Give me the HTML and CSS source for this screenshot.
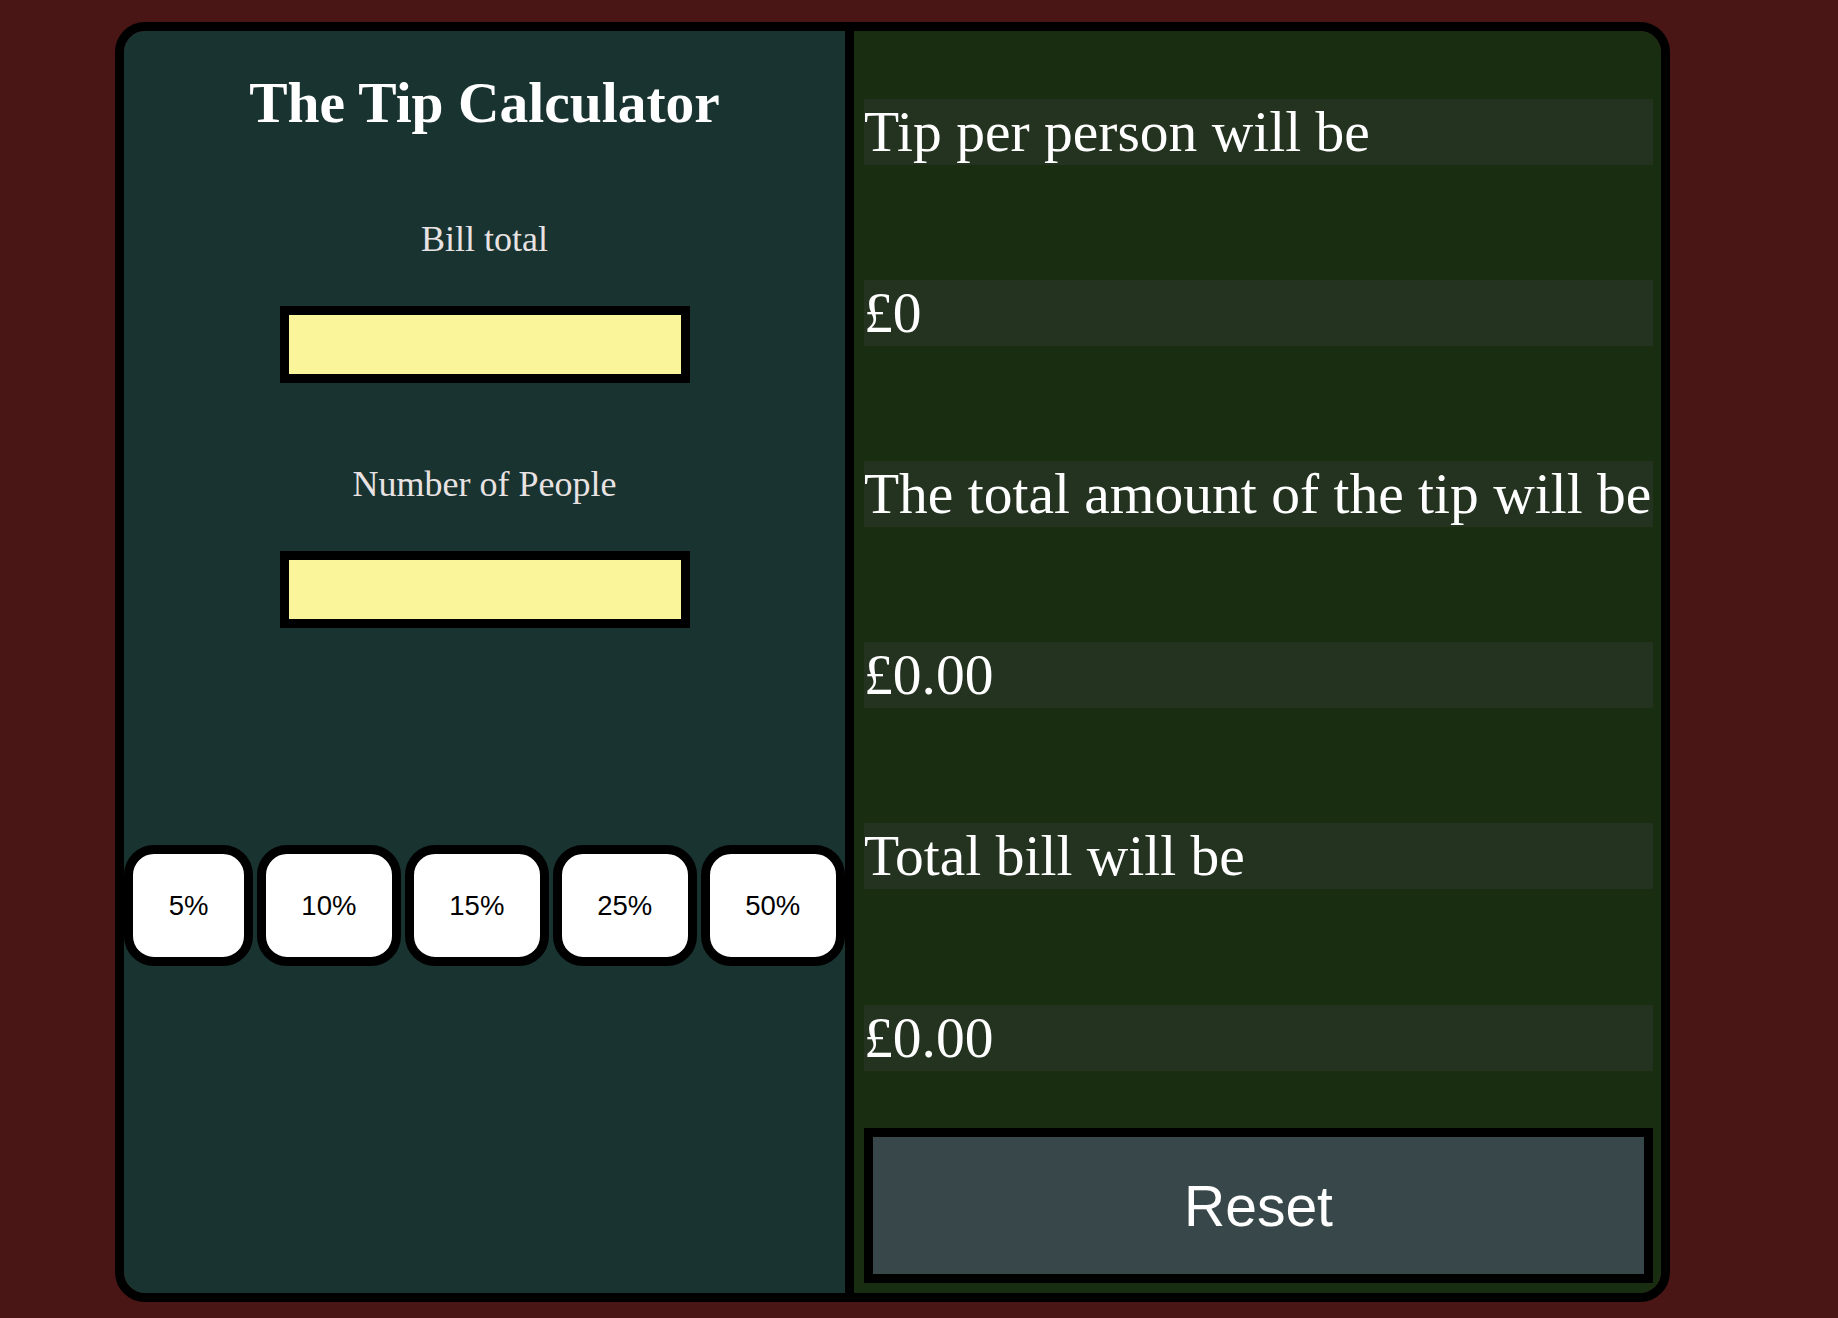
FILE: index.html
```html
<!DOCTYPE html>
<html lang="en">
<head>
<meta charset="utf-8">
<title>The Tip Calculator</title>
<link rel="stylesheet" href="styles.css">
</head>
<body>
<main class="calculator">
  <section class="inputs">
    <h1 class="title">The Tip Calculator</h1>
    <label class="field-label field-label--first" for="bill">Bill total</label>
    <input class="field-input" id="bill" type="text">
    <label class="field-label field-label--second" for="people">Number of People</label>
    <input class="field-input" id="people" type="text">
    <div class="tips">
      <button class="tip-btn" type="button">5%</button>
      <button class="tip-btn" type="button">10%</button>
      <button class="tip-btn" type="button">15%</button>
      <button class="tip-btn" type="button">25%</button>
      <button class="tip-btn" type="button">50%</button>
    </div>
  </section>
  <section class="results">
    <p class="result">Tip per person will be</p>
    <p class="result">£0</p>
    <p class="result">The total amount of the tip will be</p>
    <p class="result">£0.00</p>
    <p class="result">Total bill will be</p>
    <p class="result">£0.00</p>
    <button class="reset-btn" type="button">Reset</button>
  </section>
</main>
</body>
</html>
```
FILE: styles.css
```css
html, body {
  margin: 0;
  padding: 0;
}

body {
  background: #4a1515;
  font-family: "Liberation Serif", "Times New Roman", serif;
  height: 1318px;
  overflow: hidden;
}

.calculator {
  box-sizing: border-box;
  width: 1555px;
  height: 1280px;
  margin: 22px 0 0 115px;
  border: 9px solid #000;
  border-radius: 30px;
  overflow: hidden;
  display: grid;
  grid-template-columns: 730px 1fr;
}

.inputs {
  background: #183330;
  border-right: 9px solid #000;
  display: flex;
  flex-direction: column;
  align-items: center;
  min-width: 0;
}

.title {
  margin: 39px 0 0;
  font-size: 57.5px;
  line-height: 66px;
  font-weight: bold;
  color: #ffffff;
  white-space: nowrap;
}

.field-label {
  display: block;
  font-size: 36px;
  line-height: 41px;
  color: #e8e2e2;
  margin-bottom: 46px;
}

.field-label--first {
  margin-top: 83px;
}

.field-label--second {
  margin-top: 81px;
}

.field-input {
  box-sizing: border-box;
  width: 410px;
  height: 77px;
  margin: 0;
  padding: 0 10px;
  border: 9px solid #000;
  border-radius: 0;
  background: #faf59a;
  font-family: "Liberation Serif", serif;
  font-size: 30px;
  outline: none;
}

.tips {
  margin-top: 217px;
  align-self: stretch;
  display: flex;
  gap: 3.5px;
}

.tip-btn {
  flex: 1 1 auto;
  margin: 0;
  padding: 36px 30px;
  border: 9px solid #000;
  border-radius: 30px;
  background: #ffffff;
  color: #000;
  font-family: "Liberation Sans", Arial, sans-serif;
  font-size: 27.5px;
  line-height: 31px;
}

.results {
  background: #192e11;
  padding: 10px 8px 10px 10px;
  display: flex;
  flex-direction: column;
  min-width: 0;
}

.result {
  margin: 57.6px 0;
  background: #243320;
  color: #ffffff;
  font-size: 57.5px;
  line-height: 66px;
  white-space: nowrap;
}

.reset-btn {
  box-sizing: border-box;
  width: 100%;
  height: 155px;
  margin: 0;
  border: 9px solid #000;
  border-radius: 0;
  background: #384749;
  color: #ffffff;
  font-family: "Liberation Sans", Arial, sans-serif;
  font-size: 57px;
  line-height: 66px;
}
```
